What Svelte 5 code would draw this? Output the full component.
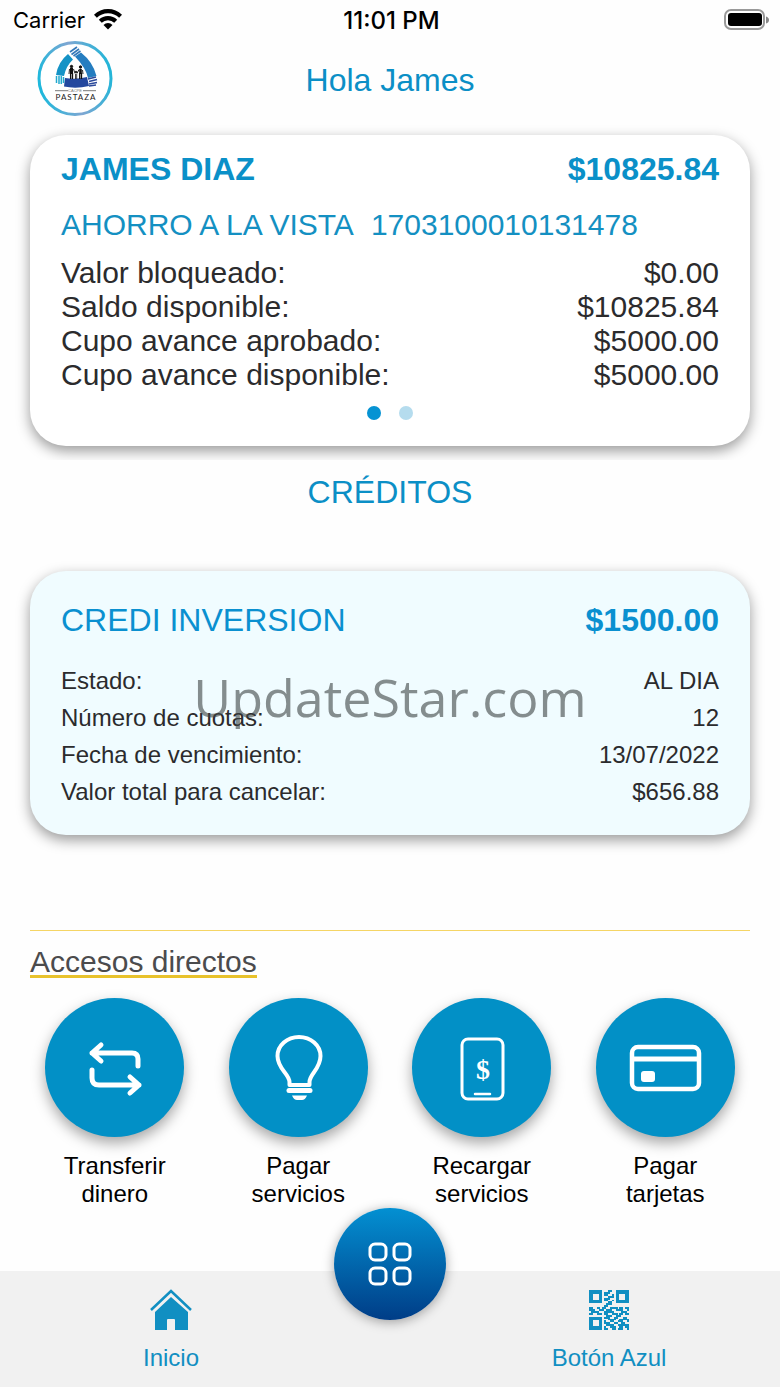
<script lang="ts">
  const account = {
    owner: 'JAMES DIAZ',
    balance: '$10825.84',
    type: 'AHORRO A LA VISTA',
    number: '1703100010131478',
    rows: [
      { label: 'Valor bloqueado:', value: '$0.00' },
      { label: 'Saldo disponible:', value: '$10825.84' },
      { label: 'Cupo avance aprobado:', value: '$5000.00' },
      { label: 'Cupo avance disponible:', value: '$5000.00' },
    ],
  };

  const credit = {
    name: 'CREDI INVERSION',
    amount: '$1500.00',
    rows: [
      { label: 'Estado:', value: 'AL DIA' },
      { label: 'Número de cuotas:', value: '12' },
      { label: 'Fecha de vencimiento:', value: '13/07/2022' },
      { label: 'Valor total para cancelar:', value: '$656.88' },
    ],
  };

  const shortcuts = [
    { icon: 'transfer', first: 'Transferir', second: 'dinero' },
    { icon: 'bulb', first: 'Pagar', second: 'servicios' },
    { icon: 'phone', first: 'Recargar', second: 'servicios' },
    { icon: 'card', first: 'Pagar', second: 'tarjetas' },
  ];

  const qr = [
    '111111100011001111111',
    '111111101110001111111',
    '110001101100101100011',
    '110001100011101100011',
    '110001101110001100011',
    '111111101100101111111',
    '111111100011001111111',
    '000000000111000000000',
    '000000001100000000000',
    '110011011001111011011',
    '111001110111001111001',
    '011110001111100001110',
    '110011101100111011011',
    '000000000111001110000',
    '111111101110011000110',
    '111111100011110011111',
    '110001101001100111001',
    '110001101110011001100',
    '110001100111100111111',
    '111111101001110011011',
    '111111101100110111001',
  ];

  const qrPath = qr
    .map((line, y) => [...line].map((c, x) => (c === '1' ? `M${x} ${y}h1v1h-1z` : '')).join(''))
    .join('');

  let page = $state(0);
</script>

<div class="screen">
  <div class="status-bar">
    <div class="carrier">
      <span>Carrier</span>
      <svg width="28" height="24" viewBox="0 0 28 24" fill="none" stroke="#000" stroke-width="4.200">
        <path d="M1.400 8.200A18 18 0 0 1 26.600 8.200" />
        <path d="M6.300 13.200A11 11 0 0 1 21.700 13.200" />
        <path d="M14 21.500l-4.500-4.500a6.300 6.300 0 0 1 9 0z" fill="#000" stroke="none" />
      </svg>
    </div>
    <span class="time">11:01 PM</span>
    <svg class="battery" width="46" height="22" viewBox="0 0 46 22">
      <rect x="1" y="1" width="39" height="19" rx="6" fill="none" stroke="#999" stroke-width="2" />
      <rect x="4" y="4" width="34" height="13" rx="3" />
      <path d="M42 7.500q3 1 3 3.500t-3 3.500z" fill="#888" />
    </svg>
  </div>

  <header>
    <svg class="logo" width="76" height="76" viewBox="0 0 76 76">
      <defs>
        <linearGradient id="ring" x1="0" y1="0.6" x2="1" y2="0.4">
          <stop offset="0" stop-color="#1db8dc" />
          <stop offset="0.5" stop-color="#7fa6d2" />
          <stop offset="1" stop-color="#22b5d8" />
        </linearGradient>
      </defs>
      <circle cx="38" cy="37.500" r="36" fill="#fff" stroke="url(#ring)" stroke-width="3" />
      <path d="M31 13l5 5.500Q29 25 27 35l-8-1q2-13 12-21z" fill="#1593c6" />
      <path d="M38 15.500l6-4Q56 21 59.500 35l-8.500 2q-2-10-13-21.500z" fill="#257dc0" />
      <path d="M28 37q11 2 22-1l2 9q-13 3-25 .5z" fill="#23479e" />
      <path d="M33 11l7-5M34.500 13.500l7.500-5.500M36.500 15l7-5" stroke="#3579b9" stroke-width="1.600" />
      <path d="M19.500 35v7M22 35v8M24.300 35v8M26.500 36v6" stroke="#22a9ce" stroke-width="1.500" />
      <path d="M51 38l8-2M52 40.500l8-2M52 43l8-1.500M52 45l7-1" stroke="#2c4a9b" stroke-width="1.500" />
      <g fill="#111" stroke="#111">
        <circle cx="34.500" cy="25.500" r="1.200" />
        <circle cx="43.500" cy="26" r="1.200" />
        <circle cx="39" cy="31" r="0.800" />
        <path d="M34.500 27v6" stroke-width="3" />
        <path d="M43.500 28v5" stroke-width="2.600" />
        <path d="M33.600 32v6M35.500 32v6M42.700 32v6M44.500 32v6" stroke-width="1.300" />
        <path d="M38.500 33v5M39.700 33v5" stroke-width="0.800" />
        <path d="M32.500 28l-.5 5M36.500 28l1.500 4.500M42 28.500l-2 4M45.500 29l.5 4" stroke-width="0.900" />
      </g>
      <path d="M18 49.700h13M46 49.700h13" stroke="#555" stroke-width="0.800" />
      <text x="38" y="51" class="logo-small">CACPE</text>
      <text x="39" y="59" class="logo-name">PASTAZA</text>
    </svg>
    <h1>Hola James</h1>
  </header>

  <div class="carousel">
    <section class="card account">
      <div class="card-title">
        <strong>{account.owner}</strong>
        <strong>{account.balance}</strong>
      </div>
      <div class="account-type">
        <span>{account.type}</span>
        <span>{account.number}</span>
      </div>
      <dl>
        {#each account.rows as row}
          <div class="row">
            <dt>{row.label}</dt>
            <dd>{row.value}</dd>
          </div>
        {/each}
      </dl>
      <div class="dots">
        {#each [0, 1] as i}
          <button
            class="dot"
            class:active={page === i}
            aria-label="Cuenta {i + 1}"
            onclick={() => (page = i)}
          ></button>
        {/each}
      </div>
    </section>
  </div>

  <h2>CRÉDITOS</h2>

  <section class="card credit">
    <div class="card-title">
      <span>{credit.name}</span>
      <strong>{credit.amount}</strong>
    </div>
    <dl>
      {#each credit.rows as row}
        <div class="row">
          <dt>{row.label}</dt>
          <dd>{row.value}</dd>
        </div>
      {/each}
    </dl>
    <div class="watermark">UpdateStar.com</div>
  </section>

  <section class="access">
    <h3><span>Accesos directos</span></h3>
  </section>

  <div class="shortcuts">
    {#each shortcuts as item}
      <button class="shortcut">
        <span class="circle">
          {#if item.icon === 'transfer'}
            <svg width="80" height="80" viewBox="0 0 80 80" class="line" stroke-width="5">
              <path d="M63 38v-7q0-6-6-6H17M26 17l-9 8 9 8" />
              <path d="M17 42v8q0 7 7 7h40M55 49l9 8-9 8" />
            </svg>
          {:else if item.icon === 'bulb'}
            <svg width="80" height="80" viewBox="0 0 80 80" class="line" stroke-width="4">
              <path d="M31.500 57v-3c0-8-12-13-12-26a21.500 19 0 0 1 43 0c0 13-11 18-11 26v3z" />
              <path d="M31 62.500h21" stroke-width="5" />
              <path d="M34 67.500h15q-2 4.500-5 4.500h-5q-3 0-5-4.500z" fill="#fff" stroke="none" />
            </svg>
          {:else if item.icon === 'phone'}
            <svg width="80" height="80" viewBox="0 0 80 80" class="line" stroke-width="3">
              <rect x="20" y="11" width="41" height="60" rx="6" />
              <path d="M33 66h15" stroke-width="2.500" />
              <text x="41" y="51" class="dollar">$</text>
            </svg>
          {:else}
            <svg width="80" height="80" viewBox="0 0 80 80" class="line" stroke-width="4.500">
              <rect x="7" y="19" width="67" height="42" rx="6" />
              <path d="M8 31h65" stroke-width="5" />
              <rect x="16" y="43" width="14" height="11" rx="3" fill="#fff" stroke="none" />
            </svg>
          {/if}
        </span>
        <span class="caption">{item.first}<br />{item.second}</span>
      </button>
    {/each}
  </div>

  <nav>
    <a href="#inicio">
      <svg width="44" height="42" viewBox="0 0 44 42">
        <path d="M2 21L22 2l20 19" fill="none" stroke="#118fc2" stroke-width="2.500" />
        <path d="M22 8l17 15v18H26V31q0-1-1-1h-6q-1 0-1 1v10H6V23z" fill="#118fc2" />
      </svg>
      <span>Inicio</span>
    </a>
    <button class="menu" aria-label="Menú">
      <svg width="44" height="44" viewBox="0 0 44 44" fill="none" stroke="#fff" stroke-width="3">
        <rect x="2" y="2" width="16" height="16" rx="5" />
        <rect x="26" y="2" width="16" height="16" rx="5" />
        <rect x="2" y="26" width="16" height="16" rx="5" />
        <rect x="26" y="26" width="16" height="16" rx="5" />
      </svg>
    </button>
    <a href="#boton-azul">
      <svg width="40" height="42" viewBox="0 -0.500 21 22" shape-rendering="crispEdges">
        <path d={qrPath} fill="#118fc2" />
      </svg>
      <span>Botón Azul</span>
    </a>
  </nav>
</div>

<style>
  :global(body) {
    margin: 0;
    background: #fefefe;
  }

  .screen {
    display: flex;
    flex-direction: column;
    min-height: 100vh;
    font-family: 'Liberation Sans', Arial, sans-serif;
    color: #2b2b2d;
  }

  button {
    border: 0;
    padding: 0;
    background: none;
    font: inherit;
    color: inherit;
    cursor: pointer;
  }

  h1,
  h2,
  h3,
  dl,
  dd {
    margin: 0;
    font-weight: 400;
  }

  .status-bar {
    display: grid;
    grid-template-columns: 1fr auto 1fr;
    align-items: center;
    height: 40px;
    padding: 0 10px 0 13px;
    font-family: Inter, sans-serif;
    font-size: 22px;
    color: #000;
  }

  .carrier {
    display: flex;
    align-items: center;
    gap: 9px;
  }

  .time {
    font-size: 24px;
    font-weight: 500;
  }

  .battery {
    justify-self: end;
  }

  header {
    display: grid;
    grid-template-columns: 76px 1fr 76px;
    align-items: center;
    height: 80px;
    padding: 0 37px;
  }

  .logo {
    margin-bottom: 2px;
  }

  h1,
  h2 {
    font-size: 32px;
    line-height: 36px;
    text-align: center;
    color: #0b8fc6;
  }

  .logo-small {
    font-size: 4px;
    text-anchor: middle;
    fill: #777;
  }

  .logo-name {
    font-family: Lato, sans-serif;
    font-size: 8px;
    letter-spacing: 1px;
    text-anchor: middle;
    fill: #222;
  }

  .carousel {
    padding: 15px 0 14px;
    overflow: hidden;
  }

  .card {
    margin: 0 30px;
    padding: 0 31px;
    border-radius: 36px;
    background: #fff;
    box-shadow: 0 5px 14px rgba(0, 0, 0, 0.4);
  }

  .card-title {
    display: flex;
    justify-content: space-between;
    font-size: 32px;
    line-height: 36px;
    color: #0a90c8;
  }

  .account {
    padding-top: 16px;
    padding-bottom: 26px;
  }

  .account-type {
    display: flex;
    gap: 17px;
    margin: 21px 0 14px;
    font-size: 30px;
    line-height: 34px;
    color: #1490c2;
  }

  .row {
    display: flex;
    justify-content: space-between;
  }

  .account .row {
    font-size: 30px;
    line-height: 34px;
  }

  .dots {
    display: flex;
    justify-content: center;
    gap: 18px;
    margin-top: 14px;
  }

  .dot {
    width: 14px;
    height: 14px;
    border-radius: 50%;
    background: #b5dcee;
  }

  .dot.active {
    background: #0693d3;
  }

  h2 {
    margin: 14px 0 61px;
  }

  .credit {
    position: relative;
    padding-top: 31px;
    padding-bottom: 25px;
    background: #f0fcff;
  }

  .credit .card-title {
    margin-bottom: 24px;
    color: #0a90d0;
  }

  .credit .row {
    font-size: 24px;
    line-height: 37px;
  }

  /* sits over the rows of the card */
  .watermark {
    position: absolute;
    top: 89px;
    left: 0;
    right: 0;
    font-family: 'Open Sans', sans-serif;
    font-size: 52px;
    line-height: 74px;
    text-align: center;
    color: rgba(60, 66, 66, 0.6);
    pointer-events: none;
  }

  .access {
    margin: 95px 30px 0;
    padding-top: 14px;
    border-top: 1px solid #f5d565;
  }

  h3 {
    font-size: 30px;
    line-height: 34px;
    color: #4b4b4d;
  }

  h3 span {
    display: inline-block;
    border-bottom: 3px solid #e8c22c;
    line-height: 26px;
  }

  .shortcuts {
    display: grid;
    grid-template-columns: repeat(4, 1fr);
    padding: 19px 23px 63px;
  }

  .shortcut {
    display: flex;
    flex-direction: column;
    align-items: center;
    gap: 15px;
    color: #000;
  }

  .circle {
    display: grid;
    place-items: center;
    width: 139px;
    height: 139px;
    border-radius: 50%;
    background: #0290c6;
    box-shadow: 0 6px 14px rgba(0, 0, 0, 0.35);
  }

  .line {
    fill: none;
    stroke: #fff;
    stroke-linecap: round;
    stroke-linejoin: round;
  }

  .dollar {
    font-family: 'Liberation Serif', serif;
    font-size: 28px;
    font-weight: 700;
    text-anchor: middle;
    fill: #fff;
    stroke: none;
  }

  .caption {
    font-size: 24px;
    line-height: 28px;
  }

  nav {
    position: relative;
    display: grid;
    grid-template-columns: 1fr 1fr;
    column-gap: 96px;
    margin-top: auto;
    padding: 18px 0 15px;
    background: #f1f1f1;
  }

  nav a {
    display: flex;
    flex-direction: column;
    align-items: center;
    gap: 13px;
    font-size: 24px;
    line-height: 28px;
    color: #118fc2;
    text-decoration: none;
  }

  /* floating button, overlaps the top edge of the nav */
  .menu {
    position: absolute;
    top: -63px;
    left: 50%;
    display: grid;
    place-items: center;
    width: 112px;
    height: 112px;
    border-radius: 50%;
    background: linear-gradient(#0390d2, #003d87);
    box-shadow: 0 2px 12px rgba(0, 0, 0, 0.35);
    transform: translateX(-50%);
  }
</style>
